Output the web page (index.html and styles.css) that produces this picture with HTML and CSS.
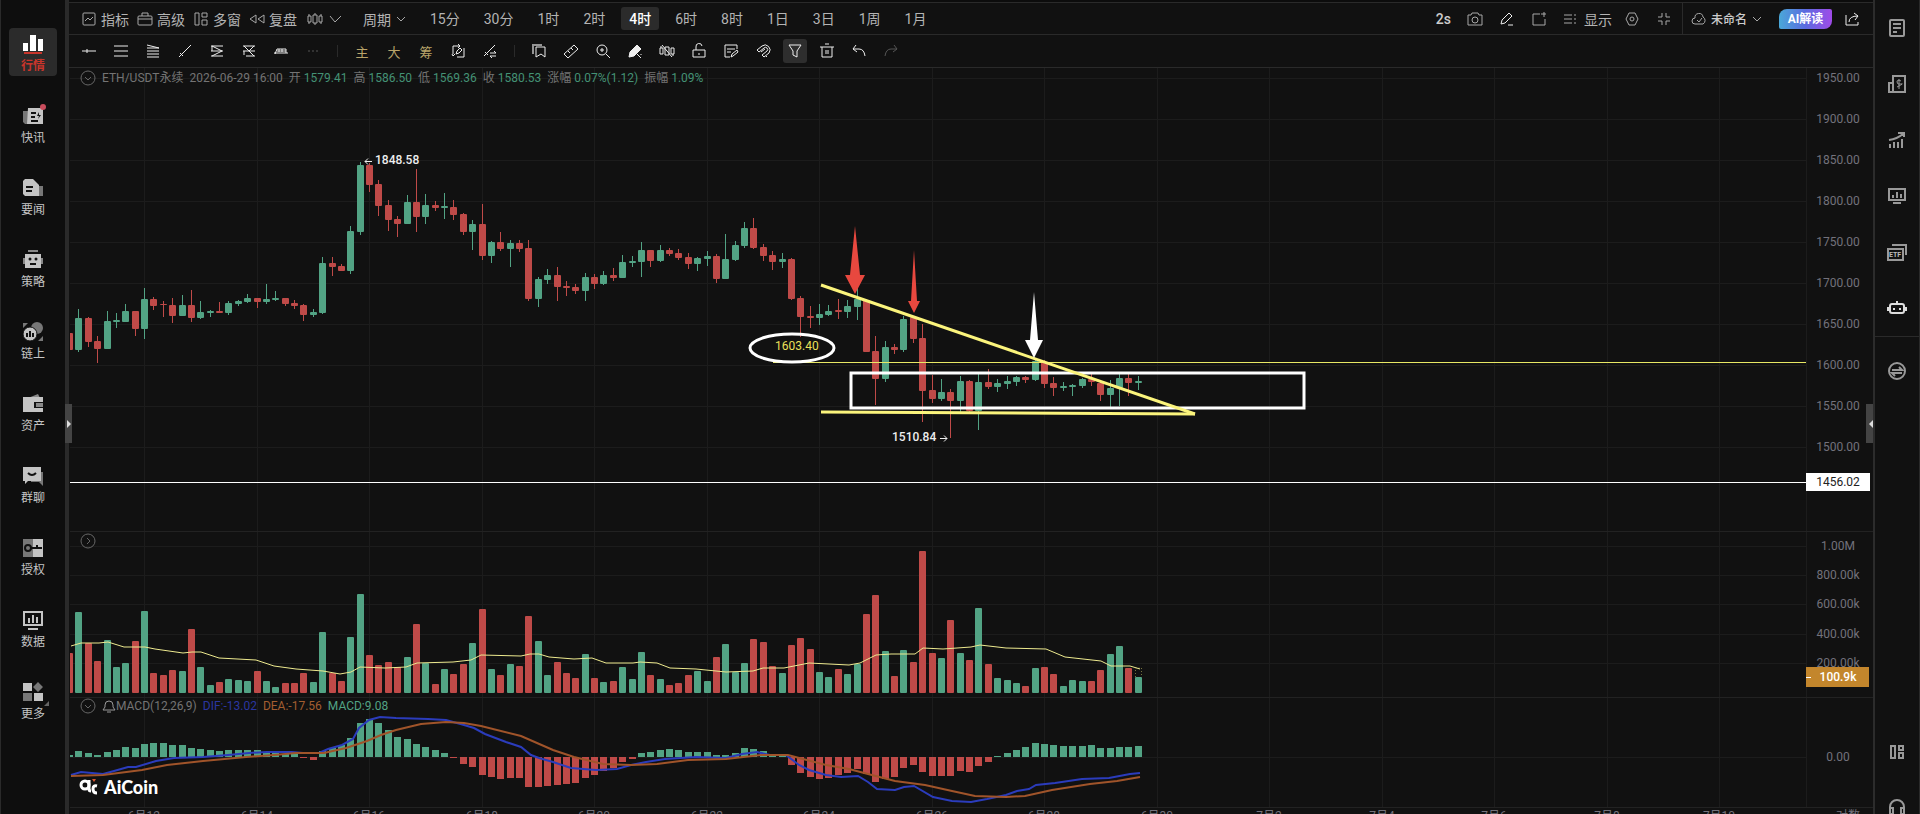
FILE: index.html
```html
<!DOCTYPE html>
<html lang="zh-CN">
<head>
  <meta charset="UTF-8" />
  <meta name="viewport" content="width=device-width, initial-scale=1.0"/>
  <title>ETH/USDT永续 – AiCoin</title>
  <link rel="stylesheet" href="styles.css">
</head>
<body>

<nav class="sidebar">
  <a href="#" class="side-item active">
    <svg viewBox="0 0 20 20"><path fill="#fff" d="M0 9h5v8H0zM7 1h6v16H7zM15 5h5v12h-5z"/><path fill="#c8352b" d="M1 18h18v2H1z"/></svg>
    <span>行情</span>
  </a>
  <a href="#" class="side-item">
    <svg viewBox="0 0 20 20"><path fill="#777" d="M0 5h5v13H2l-2-2z"/><path d="M5 2h15v16H4z"/><path stroke="#111" stroke-width="2" d="M8 7h5M8 11h4M8 15h7"/><path fill="#111" d="M16 6l-2 4h2l-1 3 3-4h-2z"/></svg>
    <span>快讯</span>
    <i class="dot"></i>
  </a>
  <a href="#" class="side-item">
    <svg viewBox="0 0 20 20"><path fill="#777" d="M14 8h6v10h-6z"/><path d="M0 3l2-2h8l6 6v11H2l-2-2z"/><path stroke="#111" stroke-width="2" d="M3 9h7M3 13h6"/></svg>
    <span>要闻</span>
  </a>
  <a href="#" class="side-item">
    <svg viewBox="0 0 20 20"><path fill="#888" d="M5 0h10v2H5zM0 8h2v6H0zM18 8h2v6h-2z"/><path d="M2 4h16v14H2z"/><circle cx="7" cy="9" r="1.5" fill="#111"/><circle cx="13" cy="9" r="1.5" fill="#111"/><path fill="#111" d="M7 13h6v2H7z"/></svg>
    <span>策略</span>
  </a>
  <a href="#" class="side-item">
    <svg viewBox="0 0 20 20"><circle cx="14" cy="6" r="6" fill="#777"/><path fill="#777" d="M0 1h5L0 6zM20 19h-5l5-5z"/><circle cx="7" cy="12" r="7" stroke="#111"/><path stroke="#111" stroke-width="2" d="M4 11v4M7 9v6M10 11v4"/></svg>
    <span>链上</span>
  </a>
  <a href="#" class="side-item">
    <svg viewBox="0 0 20 20"><path fill="#888" d="M5 4l10-4 2 4z"/><path d="M0 3h20v15H0z"/><path fill="#111" d="M11 8h9v6h-9z"/><path fill="#888" d="M13 9h7v4h-7z"/></svg>
    <span>资产</span>
  </a>
  <a href="#" class="side-item">
    <svg viewBox="0 0 20 20"><path fill="#777" d="M8 6h12v14l-4-4H8z"/><path d="M0 1h18v14H5l-3 3v-3H0z"/><path fill="none" stroke="#111" stroke-width="2" d="M5 7q4 4 8 0"/></svg>
    <span>群聊</span>
  </a>
  <a href="#" class="side-item">
    <svg viewBox="0 0 20 20"><path fill="#777" d="M0 1h10v18H0z"/><path d="M10 1h10v18H10z"/><circle cx="5" cy="10" r="3" fill="none" stroke="#111" stroke-width="2"/><path fill="none" stroke="#111" stroke-width="2" d="M8 10h11M14 10V7"/></svg>
    <span>授权</span>
  </a>
  <a href="#" class="side-item">
    <svg viewBox="0 0 20 20"><path fill="none" stroke="#c4c4c4" stroke-width="2" d="M1 2h18v13H1zM5 19h10M6 8v5M10 5v8M14 7v6"/></svg>
    <span>数据</span>
  </a>
  <a href="#" class="side-item">
    <svg viewBox="0 0 20 20"><path d="M0 1h9v8H0zM11 11h9v8h-9z"/><path fill="#777" d="M0 11h9v8H0zM15 0l5 5-5 5-5-5z"/></svg>
    <span>更多</span>
    <i class="corner"></i>
  </a>
</nav>

<main class="workspace">
  <button class="handle handle-left" aria-label="收起左栏"></button>
  <button class="handle handle-right" aria-label="收起右栏"></button>

  <header class="topbar">
    <div class="tools">
      <button class="tool"><svg class="icon" viewBox="0 0 16 16"><rect x="2" y="2" width="12" height="12" rx="1"/><path d="M4 10l3-3 2 2 3-3"/></svg>指标</button>
      <button class="tool"><svg class="icon" viewBox="0 0 16 16"><rect x="1" y="5" width="14" height="9" rx="1"/><path d="M5 5V2h6v3M1 8h14"/></svg>高级</button>
      <button class="tool"><svg class="icon" viewBox="0 0 16 16"><path d="M2 2h4v12H2zM9 2h5v4H9zM9 9h5v5H9z"/></svg>多窗</button>
      <button class="tool"><svg class="icon" viewBox="0 0 16 16"><path d="M7 4v8L1 8zM15 4v8L9 8z"/></svg>复盘</button>
      <button class="tool kline" aria-label="K线样式"><svg class="icon" viewBox="0 0 16 16"><path d="M1 5h3v6H1zM6 4h4v8H6zM12 5h3v6h-3zM2 3v2M2 11v2M8 2v2M8 12v2M14 3v2M14 11v2"/></svg><svg class="icon" viewBox="0 0 16 16"><path d="M3 5l5 6 6-6"/></svg></button>
    </div>
    <button class="tool period">周期<svg class="icon small" viewBox="0 0 12 12"><path d="M2 4l4 4 4-4"/></svg></button>
    <div class="intervals">
      <button>15分</button>
      <button>30分</button>
      <button>1时</button>
      <button>2时</button>
      <button class="active">4时</button>
      <button>6时</button>
      <button>8时</button>
      <button>1日</button>
      <button>3日</button>
      <button>1周</button>
      <button>1月</button>
    </div>
    <div class="top-right">
      <span class="speed">2s</span>
      <button aria-label="截图"><svg class="icon" viewBox="0 0 16 16"><path d="M1 4h3l1-2h6l1 2h3v10H1z"/><circle cx="8" cy="9" r="3"/></svg></button>
      <button aria-label="画笔"><svg class="icon bright" viewBox="0 0 16 16"><path d="M2 13l1-4 7-7 3 3-7 7zM9 14h5"/></svg></button>
      <button aria-label="新窗口"><svg class="icon" viewBox="0 0 16 16"><path d="M9 3H2v11h12V8M13 1v5M10 3h5"/></svg></button>
      <button class="tool"><svg class="icon" viewBox="0 0 16 16"><path d="M1 4h8M1 8h8M1 12h8M11 4h2M11 8h2M11 12h2"/></svg>显示</button>
      <button aria-label="设置"><svg class="icon" viewBox="0 0 16 16"><path d="M5 2h6l3 6-3 6H5L2 8z"/><circle cx="8" cy="8" r="2"/></svg></button>
      <button aria-label="退出全屏"><svg class="icon" viewBox="0 0 16 16"><path d="M6 2v4H2M10 2v4h4M6 14v-4H2M10 14v-4h4"/></svg></button>
    </div>
    <div class="layout-box">
      <button class="tool layout-name"><svg class="icon" viewBox="0 0 16 16"><path d="M4 13a3 3 0 0 1 0-6 4 4 0 0 1 8-1 4 4 0 0 1 0 7zM6 9l2 2 3-4"/></svg>未命名<svg class="icon small" viewBox="0 0 12 12"><path d="M2 4l4 4 4-4"/></svg></button>
      <button class="ai">AI解读</button>
      <button aria-label="分享"><svg class="icon bright" viewBox="0 0 16 16"><path d="M2 4v10h12v-3M5 11q0-6 9-6M10 2l4 3-3 4"/></svg></button>
    </div>
  </header>

  <div class="drawbar">
    <button aria-label="水平线"><svg class="icon bright" viewBox="0 0 16 16"><path d="M1 8h14M6 6v4"/></svg></button>
    <button aria-label="平行线"><svg class="icon bright" viewBox="0 0 16 16"><path d="M1 3h14M1 8h14M1 13h14"/></svg></button>
    <button aria-label="斐波那契"><svg class="icon bright" viewBox="0 0 16 16"><path d="M2 2l12 3M2 5h12M2 8h12M2 11h12M2 14h12"/></svg></button>
    <button aria-label="趋势线"><svg class="icon bright" viewBox="0 0 16 16"><path d="M2 14L14 2M3 10l3 3"/></svg></button>
    <button aria-label="通道"><svg class="icon bright" viewBox="0 0 16 16"><path d="M2 3h12M2 8h12M2 13h12M3 3l10 5M13 8L3 13M3 3v5"/></svg></button>
    <button aria-label="回调线"><svg class="icon bright" viewBox="0 0 16 16"><path d="M2 3h12M2 8h12M5 13h9M3 3l10 10M13 3L8 8M3 8v4"/></svg></button>
    <button aria-label="区间"><svg class="icon bright" viewBox="0 0 16 16"><path d="M1 10h14M2 11l2-5h9v4M6 6v3M9 6v3"/><path d="M4 8h9"/></svg></button>
    <button aria-label="更多画线"><svg class="icon dim" viewBox="0 0 16 16"><path d="M3 8h2M7 8h2M11 8h2"/></svg></button>
    <i class="sep"></i>
    <button class="gold">主</button>
    <button class="gold">大</button>
    <button class="gold">筹</button>
    <button aria-label="自动画线"><svg class="icon bright" viewBox="0 0 16 16"><path d="M9 3H3v8M7 14h7V5M8 1l2 2-2 2M2 11l1 2 2-2M6 11l1-3 3-3 2 2-3 3z"/></svg></button>
    <button aria-label="切换画线"><svg class="icon bright" viewBox="0 0 16 16"><path d="M2 13L13 2M3 9l3 3M8 10h6l-2-2M14 13H8l2 2"/></svg></button>
    <i class="sep"></i>
    <button aria-label="收藏"><svg class="icon bright" viewBox="0 0 16 16"><path d="M5 4h9v10l-4-3-5 3z"/><path d="M11 2H2v9" stroke-width="2" opacity=".6"/></svg></button>
    <button aria-label="测量"><svg class="icon bright" viewBox="0 0 16 16"><path d="M1 11l10-9 4 4-10 9zM5 8l2 2M8 5l2 2"/></svg></button>
    <button aria-label="放大"><svg class="icon bright" viewBox="0 0 16 16"><circle cx="7" cy="7" r="5"/><path d="M11 11l4 4M7 5v4M5 7h4"/></svg></button>
    <button aria-label="连续画图"><svg class="icon bright" viewBox="0 0 16 16"><path fill="#eee" d="M2 14l1-5 7-7 4 4-7 7z"/><path d="M10 11l4 4M14 11v1"/></svg></button>
    <button aria-label="隐藏K线"><svg class="icon bright" viewBox="0 0 16 16"><path d="M1 5h3v6H1zM6 4h4v8H6zM12 5h3v6h-3zM3 2l10 12M2 3v2M14 11v2"/></svg></button>
    <button aria-label="锁定"><svg class="icon bright" viewBox="0 0 16 16"><path d="M2 7h12v7H2zM5 7V4a3 3 0 0 1 6-1M8 10v2"/></svg></button>
    <button aria-label="备注"><svg class="icon bright" viewBox="0 0 16 16"><path d="M14 6V2H2v12h5M4 6h8M4 9h4M8 14l1-3 5-4 1 2-5 4z"/></svg></button>
    <button aria-label="磁吸"><svg class="icon bright" viewBox="0 0 16 16"><path d="M2 7l5-4a5 5 0 0 1 7 7l-5 4-2-2 5-4a2 2 0 0 0-3-3L4 9zM6 9l4-3M11 14l1-1"/></svg></button>
    <button class="active" aria-label="筛选"><svg class="icon bright" viewBox="0 0 16 16"><path d="M2 2h12L10 8v6l-4-2V8z"/></svg></button>
    <button aria-label="删除"><svg class="icon bright" viewBox="0 0 16 16"><path d="M1 4h14M3 4v10h10V4M6 1h4M7 7v4M9 7v4"/></svg></button>
    <button aria-label="撤销"><svg class="icon bright" viewBox="0 0 16 16"><path d="M5 2L2 6l4 3M2 6h6q5 0 6 7"/></svg></button>
    <button aria-label="重做"><svg class="icon dim" viewBox="0 0 16 16"><path d="M11 2l3 4-4 3M14 6H8q-5 0-6 7"/></svg></button>
  </div>

  <section class="chart">
    <svg class="plot" id="plot"></svg>
    <svg class="axis" id="axis"></svg>

    <div class="legend legend-main">
      <svg class="fold" viewBox="0 0 16 16"><circle cx="8" cy="8" r="7"/><path d="M5 7l3 3 3-3"/></svg>
      <span>ETH/USDT永续</span>
      <span>2026-06-29 16:00</span>
      <span>开 <b>1579.41</b></span>
      <span>高 <b>1586.50</b></span>
      <span>低 <b>1569.36</b></span>
      <span>收 <b>1580.53</b></span>
      <span>涨幅 <b>0.07%(1.12)</b></span>
      <span>振幅 <b>1.09%</b></span>
    </div>
    <div class="legend legend-vol">
      <svg class="fold" viewBox="0 0 16 16"><circle cx="8" cy="8" r="7"/><path d="M7 5l3 3-3 3"/></svg>
    </div>
    <div class="legend legend-macd">
      <svg class="fold" viewBox="0 0 16 16"><circle cx="8" cy="8" r="7"/><path d="M5 7l3 3 3-3"/></svg>
      <span class="macd-name"><svg class="bell" viewBox="0 0 14 14"><path d="M1 11h12l-2-3V6a4 4 0 0 0-8 0v2zM5 13h4"/></svg>MACD(12,26,9)</span>
      <span class="dif">DIF:-13.02</span>
      <span class="dea">DEA:-17.56</span>
      <span class="macd">MACD:9.08</span>
    </div>
    <div class="brand">
      <svg viewBox="0 0 20 18"><g fill="none" stroke="#fff" stroke-width="3"><circle cx="6" cy="7" r="4"/><path d="M10 2v9q0 2 2 2M18 8q-4-1-4 3t4 4"/></g><path fill="#d8552f" d="M13 1h4l-2 3z"/></svg>
      <span>AiCoin</span>
    </div>
  </section>
</main>

<aside class="rail">
  <button aria-label="详情"><svg viewBox="0 0 20 20"><rect x="3" y="2" width="14" height="16" rx="1"/><path d="M6 6h8M6 10h8M6 14h4"/></svg></button>
  <button aria-label="资金"><svg viewBox="0 0 20 20"><path d="M6 2h12v16H2V9h4zM6 9v9"/><path d="M14 7q-4-2-4 1t4 2-4 3M12 5v10" stroke-width="1"/></svg></button>
  <button aria-label="走势"><svg viewBox="0 0 20 20"><path d="M3 14v4M7 12v6M11 12v6M15 9v9M2 10q8-1 14-6M11 3h6v4"/></svg></button>
  <button aria-label="看板"><svg viewBox="0 0 20 20"><path d="M2 3h16v11H2zM6 17h8M6 9v3M10 6v6M14 8v4"/></svg></button>
  <button aria-label="ETF"><svg viewBox="0 0 20 20"><path d="M1 7h15v11H1zM5 3h14v10"/><text x="2" y="15" class="etf">ETF</text></svg></button>
  <button aria-label="机器人"><svg class="on" viewBox="0 0 20 20"><rect x="3" y="6" width="14" height="9" rx="2"/><path d="M1 9v4M19 9v4M7 10v2M13 10v2M10 3v2"/></svg></button>
  <hr>
  <button aria-label="交易"><svg viewBox="0 0 20 20"><circle cx="10" cy="10" r="8"/><path d="M5 9h10l-3-3M15 12H5l3 3"/></svg></button>
  <div class="rail-bottom">
    <button aria-label="布局"><svg viewBox="0 0 20 20"><path d="M4 4h4v12H4zM12 4h4v4h-4zM12 11h4v5h-4z"/></svg></button>
    <button aria-label="客服"><svg viewBox="0 0 20 20"><path d="M3 12V9a7 7 0 0 1 14 0v3M3 10h3v6H3zM14 10h3v6h-3z"/></svg></button>
  </div>
</aside>

<script src="chart.js"></script>
</body>
</html>
```

FILE: styles.css
```css
* {
  margin: 0;
  padding: 0;
  box-sizing: border-box;
}

body {
  display: flex;
  height: 100vh;
  overflow: hidden;
  background: #111;
  color: #b4b4b4;
  font-family: Roboto, "Noto Sans CJK SC", sans-serif;
  font-size: 14px;
}

button {
  background: none;
  border: none;
  color: inherit;
  font: inherit;
  cursor: pointer;
}

a {
  color: inherit;
  text-decoration: none;
}

/* Left sidebar */
.sidebar {
  flex: none;
  width: 69px;
  padding: 28px 0 0 8px;
  display: flex;
  flex-direction: column;
  gap: 24px;
  background: #0e0e0e;
  border-left: 1px solid #2a2a2a;
  border-right: 4px solid #2a2a2a;
}

.side-item {
  position: relative;
  flex: none;
  width: 48px;
  height: 48px;
  padding-top: 6px;
  display: flex;
  flex-direction: column;
  align-items: center;
  gap: 4px;
  border-radius: 4px;
  color: #c4c4c4;
  font-size: 12px;
  line-height: 16px;
}

.side-item svg {
  width: 20px;
  height: 20px;
  fill: #c4c4c4;
}

.side-item.active {
  background: #2b2b2b;
  color: #c8352b;
  font-weight: bold;
}

.dot {
  position: absolute;
  top: 4px;
  right: 11px;
  width: 6px;
  height: 6px;
  border-radius: 50%;
  background: #c94c5c;
}

.corner {
  position: absolute;
  right: 8px;
  bottom: 18px;
  border-left: 5px solid transparent;
  border-bottom: 5px solid #666;
}

/* Workspace */
.workspace {
  position: relative;
  flex: 1;
  min-width: 0;
  display: flex;
  flex-direction: column;
  border-top: 2px solid #0c0c0c;
}

.topbar,
.drawbar {
  flex: none;
  display: flex;
  align-items: center;
  border-top: 1px solid #2a2a2a;
  white-space: nowrap;
}

.topbar {
  height: 32px;
  padding-left: 12px;
}

.icon {
  flex: none;
  display: block;
  width: 16px;
  height: 16px;
  fill: none;
  stroke: #a8a8a8;
  stroke-width: 1;
}

.icon.small {
  width: 12px;
  height: 12px;
}

.icon.bright {
  stroke: #eee;
}

.icon.dim {
  stroke: #555;
}

.tools,
.tool {
  display: flex;
  align-items: center;
}

.tools {
  gap: 8px;
}

.tool {
  gap: 4px;
}

.kline {
  gap: 4px;
  margin-left: 2px;
}

.period {
  margin-left: 20px;
}

.intervals {
  display: flex;
  gap: 8px;
  margin-left: 15px;
}

.intervals button {
  height: 23px;
  padding: 1px 8px 0;
  line-height: 23px;
  border-radius: 3px;
}

.intervals .active {
  background: #2b2b2b;
  color: #fff;
  font-weight: 500;
}

.top-right {
  display: flex;
  align-items: center;
  gap: 16px;
  margin-left: auto;
  padding-right: 10px;
}

.top-right .tool {
  gap: 5px;
  margin-right: -4px;
}

.speed {
  color: #ccc;
  font-weight: 500;
}

.layout-box {
  display: flex;
  align-items: center;
  gap: 12px;
  height: 100%;
  padding: 0 13px 0 8px;
  border-left: 1px solid #2a2a2a;
}

.layout-name {
  margin-right: 4px;
  color: #ccc;
  font-size: 12px;
  font-weight: 500;
}

.ai {
  width: 53px;
  height: 20px;
  border-radius: 8px 2px 8px 2px;
  background: linear-gradient(90deg, #4aa8d8, #5b6be0 50%, #a04be8);
  color: #fff;
  font-size: 12px;
  font-weight: bold;
  line-height: 20px;
}

.drawbar {
  height: 33px;
  padding-left: 8px;
  gap: 8px;
}

.drawbar button {
  display: grid;
  place-items: center;
  width: 24px;
  height: 24px;
  border-radius: 3px;
}

.drawbar .active {
  background: #2e2e2e;
}

.drawbar .gold {
  color: #b9a46a;
  font-size: 13px;
}

.sep {
  width: 1px;
  height: 12px;
  margin: 0 4px;
  background: #2a2a2a;
}

.handle {
  position: absolute;
  top: 402px;
  width: 7px;
  height: 39px;
  background: #444;
  z-index: 2;
}

.handle::after {
  content: "";
  display: block;
  border: 4px solid transparent;
}

.handle-left {
  left: -4px;
}

.handle-left::after {
  margin-left: 2px;
  border-left-color: #ddd;
}

.handle-right {
  right: 0;
}

.handle-right::after {
  margin-left: -2px;
  border-right-color: #ddd;
}

/* Chart */
.chart {
  position: relative;
  flex: 1;
  min-height: 0;
  display: flex;
  padding-left: 1px;
  border-top: 1px solid #2a2a2a;
}

.plot {
  flex: 1;
  min-width: 0;
  height: 100%;
}

.axis {
  flex: none;
  width: 67px;
  height: 100%;
}

.grid {
  stroke: #1c1c1c;
}

.divider {
  stroke: #222;
}

.up {
  fill: #52a384;
}

.down {
  fill: #bf4a48;
}

.line {
  fill: none;
  stroke-width: 2;
}

.line-ma {
  stroke: #eeea8f;
  stroke-width: 1;
}

.line-dif {
  stroke: #2b3cbc;
}

.line-dea {
  stroke: #a0542a;
}

.price-mark {
  fill: #eee;
  font-size: 12px;
  font-weight: 500;
}

.mark-arrow {
  fill: none;
  stroke: #eee;
}

.trend {
  stroke: #fbf47c;
  stroke-width: 3;
}

.level {
  stroke: #e8e864;
}

.level-white {
  stroke: #fff;
}

.level-text {
  fill: #ece05a;
  font-size: 12px;
}

.box {
  fill: none;
  stroke: #fff;
  stroke-width: 3;
}

.arrow-red {
  fill: #e8483f;
}

.arrow-white {
  fill: #fff;
}

.pending {
  fill: none;
  stroke: #77743f;
  stroke-dasharray: 1 2;
}

.tick {
  fill: #73727c;
  font-size: 12px;
  text-anchor: middle;
}

.tag-white {
  fill: #fff;
}

.tag-gold {
  fill: #c3862c;
}

.tick.on-white {
  fill: #222;
}

.tick.on-gold {
  fill: #fff;
  font-weight: 500;
}

.legend {
  position: absolute;
  left: 11px;
  display: flex;
  align-items: center;
  gap: 6px;
  color: #747474;
  font-size: 12px;
  line-height: 16px;
  white-space: nowrap;
}

.legend b {
  color: #449275;
  font-weight: normal;
}

.legend-main {
  top: 2px;
}

.legend-vol {
  top: 465px;
}

.legend-macd {
  top: 630px;
}

.fold,
.bell {
  fill: none;
  stroke: #666;
}

.fold {
  width: 16px;
  height: 16px;
}

.bell {
  width: 14px;
  height: 14px;
  stroke: #999;
}

.macd-name {
  display: flex;
  align-items: center;
}

.legend .dif {
  color: #2b36a0;
}

.legend .dea {
  color: #a35e30;
}

.legend .macd {
  color: #52a384;
}

.brand {
  position: absolute;
  left: 10px;
  top: 708px;
  display: flex;
  align-items: center;
  gap: 5px;
  color: #fff;
  font-family: Lato, sans-serif;
  font-size: 18px;
  font-weight: 900;
  line-height: 22px;
}

.brand svg {
  width: 20px;
  height: 18px;
}

/* Right rail */
.rail {
  flex: none;
  width: 47px;
  padding-top: 18px;
  display: flex;
  flex-direction: column;
  align-items: center;
  gap: 36px;
  border-left: 2px solid #2c2c2c;
  border-right: 1px solid #2a2a2a;
}

.rail button {
  flex: none;
  width: 20px;
  height: 20px;
}

.rail svg {
  display: block;
  width: 20px;
  height: 20px;
  fill: none;
  stroke: #999;
  stroke-width: 2;
}

.rail svg.on {
  stroke: #ddd;
}

.rail .etf {
  fill: #bbb;
  stroke: none;
  font-size: 7px;
  font-weight: bold;
}

.rail hr {
  width: 100%;
  border: none;
  border-top: 1px solid #2a2a2a;
  margin: -18px 0 -12px;
}

.rail-bottom {
  display: flex;
  flex-direction: column;
  gap: 36px;
  margin-top: auto;
  margin-bottom: -4px;
}
```

FILE: chart.js
```js
// one row per candle: direction, high, body top, body bottom, low, volume, macd
const candles = [
  ['d', 265, 265, 282, 282, 40, 2],
  ['u', 241, 250, 282, 284, 81, 6],
  ['d', 249, 250, 274, 279, 50, 4],
  ['d', 268, 273, 281, 295, 32, 2],
  ['u', 243, 253, 281, 281, 53, 5],
  ['u', 245, 252, 254, 260, 26, 7],
  ['u', 236, 243, 254, 254, 30, 10],
  ['d', 243, 243, 261, 268, 52, 9],
  ['u', 220, 231, 261, 271, 82, 13],
  ['d', 229, 231, 238, 242, 20, 14],
  ['d', 233, 236, 237, 249, 18, 14],
  ['d', 230, 237, 248, 255, 23, 12],
  ['u', 227, 237, 248, 248, 22, 12],
  ['d', 222, 237, 250, 254, 64, 9],
  ['u', 233, 244, 250, 251, 26, 8],
  ['u', 242, 243, 245, 249, 8, 7],
  ['d', 234, 243, 245, 245, 11, 6],
  ['u', 233, 235, 245, 247, 14, 7],
  ['u', 232, 233, 236, 238, 13, 7],
  ['u', 226, 230, 234, 235, 12, 7],
  ['d', 230, 230, 234, 240, 22, 7],
  ['u', 216, 231, 234, 236, 12, 5],
  ['u', 223, 230, 232, 233, 6, 4],
  ['d', 230, 230, 236, 238, 10, 3],
  ['d', 232, 235, 238, 241, 10, 3],
  ['d', 236, 237, 247, 253, 20, -1],
  ['u', 241, 244, 247, 249, 11, -3],
  ['u', 189, 195, 245, 246, 61, 6],
  ['d', 189, 195, 199, 208, 20, 9],
  ['d', 196, 198, 203, 203, 12, 12],
  ['u', 158, 163, 203, 206, 56, 19],
  ['u', 94, 97, 164, 167, 99, 34],
  ['d', 95, 97, 117, 124, 38, 38],
  ['d', 112, 116, 138, 148, 28, 34],
  ['d', 132, 137, 152, 163, 31, 27],
  ['d', 148, 151, 156, 169, 26, 20],
  ['u', 127, 134, 156, 156, 36, 18],
  ['d', 101, 134, 149, 164, 69, 13],
  ['u', 126, 137, 149, 156, 30, 10],
  ['d', 133, 137, 140, 143, 9, 7],
  ['u', 125, 138, 140, 151, 24, 4],
  ['d', 132, 139, 147, 152, 19, -1],
  ['d', 145, 146, 164, 167, 29, -7],
  ['u', 152, 156, 164, 182, 50, -10],
  ['d', 136, 156, 188, 192, 84, -18],
  ['u', 173, 174, 188, 195, 24, -20],
  ['d', 164, 174, 181, 183, 18, -22],
  ['u', 172, 175, 181, 199, 29, -21],
  ['d', 172, 175, 181, 184, 27, -21],
  ['d', 172, 180, 231, 233, 77, -30],
  ['u', 209, 211, 231, 239, 52, -30],
  ['u', 201, 207, 212, 216, 18, -29],
  ['d', 199, 207, 219, 233, 31, -28],
  ['d', 213, 218, 220, 228, 20, -27],
  ['d', 216, 219, 223, 226, 15, -26],
  ['u', 205, 209, 223, 233, 39, -21],
  ['d', 206, 209, 216, 221, 15, -18],
  ['u', 203, 207, 216, 217, 11, -14],
  ['d', 200, 207, 210, 213, 12, -11],
  ['u', 187, 194, 210, 210, 26, -5],
  ['u', 188, 193, 195, 199, 14, -2],
  ['u', 174, 182, 194, 209, 41, 4],
  ['d', 182, 182, 193, 199, 18, 5],
  ['u', 177, 182, 193, 194, 14, 7],
  ['d', 180, 182, 186, 188, 8, 8],
  ['d', 181, 185, 190, 192, 10, 7],
  ['d', 185, 189, 196, 201, 18, 5],
  ['u', 189, 190, 196, 203, 22, 5],
  ['u', 183, 188, 191, 198, 12, 5],
  ['d', 186, 188, 211, 215, 36, 2],
  ['u', 166, 191, 211, 211, 49, 2],
  ['u', 173, 177, 192, 193, 21, 4],
  ['u', 154, 160, 178, 180, 30, 9],
  ['d', 150, 160, 180, 181, 54, 8],
  ['d', 176, 179, 188, 193, 51, 6],
  ['d', 183, 187, 194, 202, 27, 3],
  ['u', 185, 191, 194, 200, 20, 2],
  ['d', 190, 191, 231, 232, 48, -8],
  ['d', 228, 230, 249, 269, 55, -16],
  ['d', 238, 248, 250, 260, 44, -20],
  ['u', 236, 246, 250, 257, 21, -22],
  ['u', 237, 243, 247, 248, 16, -21],
  ['d', 231, 242, 244, 251, 24, -18],
  ['u', 232, 238, 244, 250, 19, -16],
  ['u', 220, 231, 239, 252, 29, -12],
  ['d', 231, 232, 284, 284, 79, -17],
  ['d', 268, 283, 311, 337, 98, -25],
  ['u', 273, 279, 311, 314, 42, -22],
  ['d', 276, 279, 282, 286, 17, -20],
  ['u', 248, 251, 282, 284, 43, -11],
  ['d', 248, 249, 271, 275, 31, -8],
  ['d', 256, 270, 323, 354, 142, -15],
  ['d', 307, 322, 331, 335, 40, -19],
  ['u', 311, 324, 331, 333, 35, -19],
  ['d', 321, 324, 333, 370, 73, -19],
  ['u', 308, 313, 333, 344, 40, -14],
  ['d', 312, 313, 343, 345, 33, -15],
  ['u', 306, 314, 343, 362, 85, -9],
  ['d', 301, 314, 319, 321, 29, -5],
  ['u', 311, 315, 319, 324, 15, 1],
  ['u', 308, 313, 316, 321, 13, 4],
  ['u', 308, 309, 314, 318, 10, 7],
  ['d', 308, 309, 312, 315, 7, 10],
  ['u', 291, 293, 312, 313, 25, 14],
  ['d', 292, 294, 316, 320, 26, 13],
  ['d', 309, 315, 320, 328, 19, 12],
  ['u', 314, 318, 320, 323, 7, 11],
  ['u', 316, 317, 319, 328, 13, 11],
  ['u', 310, 311, 318, 320, 12, 11],
  ['d', 306, 311, 314, 318, 12, 12],
  ['d', 313, 315, 327, 333, 23, 9],
  ['u', 312, 320, 327, 339, 39, 9],
  ['u', 306, 310, 320, 338, 47, 10],
  ['d', 306, 310, 315, 328, 25, 10],
  ['u', 308, 313, 315, 322, 16, 11]
];

const ma = '1,578 11,575 29,575 38,574 54,579 75,579 85,581 113,585 122,584 131,584 149,590 186,592 204,598 226,601 253,603 270,606 281,604 290,599 315,600 336,599 347,595 383,594 401,592 411,587 451,588 460,586 469,586 479,589 504,591 522,590 536,595 563,595 570,594 587,595 600,600 626,601 656,604 683,603 693,600 714,600 739,595 779,597 790,595 806,587 821,586 845,586 853,580 873,581 901,579 910,577 936,580 976,581 995,589 1031,593 1041,598 1060,598 1070,601';
const dif = '1,707 11,704 33,706 44,703 58,699 66,699 86,693 104,690 133,689 158,687 179,685 197,684 222,684 233,685 249,685 258,681 272,677 283,671 289,660 299,652 310,649 326,650 358,651 376,652 394,657 404,660 415,666 436,674 451,679 461,687 469,690 483,694 501,700 526,702 547,701 561,697 576,694 595,691 626,689 656,690 672,686 687,684 700,687 716,687 729,697 739,702 756,707 771,709 788,708 798,714 807,721 825,722 834,719 844,718 863,729 882,733 901,734 917,731 936,727 947,723 959,721 966,717 985,715 1012,711 1039,710 1060,706 1070,705';
const dea = '1,708 33,707 72,702 97,697 133,693 176,689 204,687 226,685 254,685 276,680 297,673 311,667 326,662 351,656 376,654 394,655 411,658 451,668 483,682 504,689 533,696 561,697 587,696 618,692 656,691 691,687 718,687 733,691 756,697 779,701 798,706 825,713 855,717 882,723 905,728 936,729 955,728 982,722 1020,716 1047,713 1070,709';

const dates = ['6月12', '6月14', '6月16', '6月18', '6月20', '6月22', '6月24', '6月26', '6月28', '6月30', '7月2', '7月4', '7月6', '7月8', '7月10'];
const priceRows = ['1950.00', '1900.00', '1850.00', '1800.00', '1750.00', '1700.00', '1650.00', '1600.00', '1550.00', '1500.00'];
const volumeRows = [['1.00M', 478], ['800.00k', 507], ['600.00k', 536], ['400.00k', 566], ['200.00k', 595]];

const STEP = 9.375;
const VOL_BASE = 625;
const MACD_BASE = 689;

const rect = (cls, x, y, w, h, r = 0) =>
  `<rect class="${cls}" x="${x}" y="${y}" width="${w}" height="${h}" rx="${r}"/>`;
const hline = (cls, y, from = 0) =>
  `<line class="${cls}" x1="${from}" x2="100%" y1="${y}.5" y2="${y}.5"/>`;

let plot = '';

// grid
priceRows.forEach((_, i) => { plot += hline('grid', 10 + i * 41); });
volumeRows.forEach(row => { plot += hline('grid', row[1]); });
plot += hline('grid', MACD_BASE);
dates.forEach((label, i) => {
  const x = Math.round(74 + i * STEP * 12);
  plot += `<line class="grid" x1="${x}.5" x2="${x}.5" y1="0" y2="739"/>`;
  plot += `<text class="tick" x="${x}" y="752">${label}</text>`;
});
plot += hline('divider', 463) + hline('divider', 629) + hline('divider', 739);

// candles, volume and macd bars
candles.forEach(([dir, high, top, bottom, low, vol, macd], i) => {
  const x = Math.round(STEP * i);
  const cls = dir === 'u' ? 'up' : 'down';
  plot += rect(cls, x - 1, high, 1, low - high);
  plot += rect(cls, x - 4, top, 7, Math.max(bottom - top, 1), 1);
  plot += rect(cls, x - 4, VOL_BASE - vol, 7, vol, 1);
  plot += macd > 0
    ? rect('up', x - 4, MACD_BASE - macd, 7, macd)
    : rect('down', x - 4, MACD_BASE, 7, -macd);
});

// projected volume of the open candle
plot += '<path class="pending" d="M1065.500 609v-9h6v9"/>';

plot += `<polyline class="line line-ma" points="${ma}"/>`;
plot += `<polyline class="line line-dif" points="${dif}"/>`;
plot += `<polyline class="line line-dea" points="${dea}"/>`;

// drawings
plot += hline('level', 294, 703);
plot += hline('level-white', 414);
plot += '<rect class="box" x="781" y="305" width="453" height="35"/>';
plot += '<line class="trend" x1="751" y1="217" x2="1125" y2="346"/>';
plot += '<line class="trend" x1="751" y1="344" x2="1125" y2="346"/>';
plot += '<ellipse class="box" cx="722" cy="280" rx="42" ry="14"/>';
plot += '<text class="level-text" x="705" y="282">1603.40</text>';
plot += '<polygon class="arrow-red" points="785,158 790,207 795,207 785,226 775,207 780,207"/>';
plot += '<polygon class="arrow-red" points="844,182 847,233 850,233 844,245 838,233 841,233"/>';
plot += '<polygon class="arrow-white" points="964,224 968,272 973,272 964,290 955,272 960,272"/>';
plot += '<path class="mark-arrow" d="M302 93.500h-7m3-3l-3 3 3 3"/><text class="price-mark" x="305" y="96">1848.58</text>';
plot += '<path class="mark-arrow" d="M870 370.500h7m-3-3l3 3-3 3"/><text class="price-mark" x="822" y="373">1510.84</text>';

document.getElementById('plot').innerHTML = plot;

// price axis
let axis = '<line class="grid" x1="0.5" x2="0.5" y1="0" y2="739"/>';
axis += hline('divider', 463) + hline('divider', 629) + hline('divider', 739);
priceRows.forEach((label, i) => {
  axis += `<text class="tick" x="32" y="${14 + i * 41}">${label}</text>`;
});
volumeRows.forEach(([label, y]) => {
  axis += `<text class="tick" x="32" y="${y + 4}">${label}</text>`;
});
axis += `<text class="tick" x="32" y="${MACD_BASE + 4}">0.00</text>`;
axis += rect('tag-white', 0, 405, 64, 18) + '<text class="tick on-white" x="32" y="418">1456.02</text>';
axis += rect('tag-gold', 0, 599, 63, 20) + '<path stroke="#fff" d="M0 609.500h5"/><text class="tick on-gold" x="32" y="613">100.9k</text>';
axis += '<text class="tick" x="42" y="752">对数</text>';
document.getElementById('axis').innerHTML = axis;
```
